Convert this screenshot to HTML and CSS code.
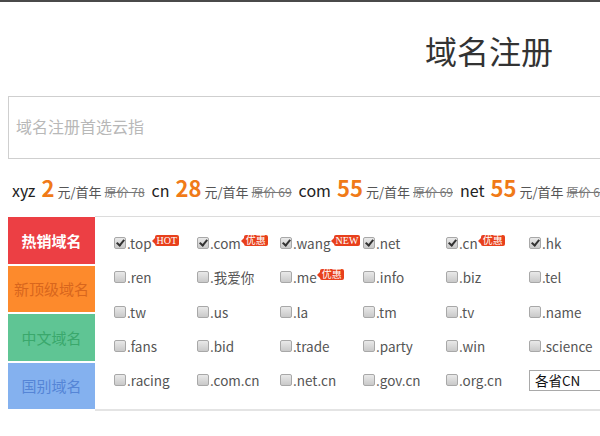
FILE: index.html
```html
<!DOCTYPE html>
<html lang="zh-CN">
<head>
<meta charset="utf-8">
<title>域名注册</title>
<link rel="stylesheet" href="styles.css">
</head>
<body>
<div class="topline"></div>
<h1 class="title">域名注册</h1>
<div class="search">
  <input class="search-input" type="text" placeholder="域名注册首选云指">
</div>
<div class="prices">
  <span class="tld">xyz</span><span class="num">2</span><span class="unit">元/首年</span><span class="orig">原价 78</span>
  <span class="tld">cn</span><span class="num">28</span><span class="unit">元/首年</span><span class="orig">原价 69</span>
  <span class="tld">com</span><span class="num">55</span><span class="unit">元/首年</span><span class="orig">原价 69</span>
  <span class="tld">net</span><span class="num">55</span><span class="unit">元/首年</span><span class="orig">原价 69</span>
</div>
<div class="panel">
  <div class="tabs">
    <div class="tab tab-hot">热销域名</div>
    <div class="tab tab-new">新顶级域名</div>
    <div class="tab tab-cn">中文域名</div>
    <div class="tab tab-country">国别域名</div>
  </div>
  <div class="grid">
    <label class="item"><span class="cb on"></span>.top<span class="badge">HOT</span></label>
    <label class="item"><span class="cb on"></span>.com<span class="badge">优惠</span></label>
    <label class="item"><span class="cb on"></span>.wang<span class="badge">NEW</span></label>
    <label class="item"><span class="cb on"></span>.net</label>
    <label class="item"><span class="cb on"></span>.cn<span class="badge">优惠</span></label>
    <label class="item"><span class="cb on"></span>.hk</label>

    <label class="item"><span class="cb"></span>.ren</label>
    <label class="item"><span class="cb"></span>.我爱你</label>
    <label class="item"><span class="cb"></span>.me<span class="badge">优惠</span></label>
    <label class="item"><span class="cb"></span>.info</label>
    <label class="item"><span class="cb"></span>.biz</label>
    <label class="item"><span class="cb"></span>.tel</label>

    <label class="item"><span class="cb"></span>.tw</label>
    <label class="item"><span class="cb"></span>.us</label>
    <label class="item"><span class="cb"></span>.la</label>
    <label class="item"><span class="cb"></span>.tm</label>
    <label class="item"><span class="cb"></span>.tv</label>
    <label class="item"><span class="cb"></span>.name</label>

    <label class="item"><span class="cb"></span>.fans</label>
    <label class="item"><span class="cb"></span>.bid</label>
    <label class="item"><span class="cb"></span>.trade</label>
    <label class="item"><span class="cb"></span>.party</label>
    <label class="item"><span class="cb"></span>.win</label>
    <label class="item"><span class="cb"></span>.science</label>

    <label class="item"><span class="cb"></span>.racing</label>
    <label class="item"><span class="cb"></span>.com.cn</label>
    <label class="item"><span class="cb"></span>.net.cn</label>
    <label class="item"><span class="cb"></span>.gov.cn</label>
    <label class="item"><span class="cb"></span>.org.cn</label>
    <div class="item"><span class="select">各省CN</span></div>
  </div>
</div>
</body>
</html>
```

FILE: styles.css
```css
html, body {
  margin: 0;
  padding: 0;
  background: #fff;
  overflow: hidden;
}
body {
  width: 600px;
  height: 436px;
  font-family: "Noto Sans CJK SC", "Noto Sans", sans-serif;
  color: #333;
}
.topline {
  height: 2px;
  background: #4a4a4a;
}
.title {
  margin: 27px 0 0 0;
  padding-left: 425px;
  font-size: 32px;
  line-height: 42px;
  font-weight: normal;
  color: #333;
  white-space: nowrap;
}
.search {
  margin-top: 25px;
  padding-left: 8px;
}
.search-input {
  display: block;
  box-sizing: border-box;
  width: 640px;
  height: 63px;
  border: 1px solid #cfcfcf;
  padding: 0 7px 4px 7px;
  font-family: "Noto Sans CJK SC", sans-serif;
  font-size: 16px;
  color: #333;
  outline: none;
}
.search-input::placeholder {
  color: #b8b8b8;
}
.prices {
  margin-top: 13px;
  padding-left: 12px;
  height: 30px;
  line-height: 30px;
  white-space: nowrap;
  display: flex;
  align-items: baseline;
}
.tld {
  font-size: 16px;
  color: #222;
  margin-right: 6px;
}
.num {
  font-size: 22px;
  font-weight: bold;
  color: #f07a18;
  margin-right: 3px;
}
.unit {
  font-size: 13px;
  color: #555;
  margin-right: 3px;
}
.orig {
  font-size: 12px;
  color: #777;
  text-decoration: line-through;
  margin-right: 7px;
}
.panel {
  margin-top: 14px;
  margin-left: 8px;
  display: flex;
  width: 640px;
}
.tabs {
  width: 87px;
  display: flex;
  flex-direction: column;
  gap: 2px;
  padding-top: 1px;
}
.tab {
  height: 46.5px;
  display: flex;
  align-items: center;
  justify-content: center;
  font-size: 15px;
}
.tab-hot {
  background: #ec3f44;
  color: #fff;
  font-weight: bold;
}
.tab-new {
  background: #fd8a2c;
  color: #d8661d;
}
.tab-cn {
  background: #5fc594;
  color: #3aa86c;
}
.tab-country {
  background: #84b1ef;
  color: #5585d6;
}
.grid {
  flex: 1;
  border-top: 1px solid #dcdcdc;
  border-bottom: 2px solid #e4e4e4;
  padding: 9px 0 12px 19px;
  display: grid;
  grid-template-columns: repeat(6, 83px);
  grid-auto-rows: 34.25px;
  align-items: center;
}
.item {
  display: flex;
  align-items: center;
  height: 20px;
  font-size: 13.5px;
  color: #555;
  white-space: nowrap;
  font-family: "Noto Sans CJK SC", sans-serif;
}
.cb {
  box-sizing: border-box;
  width: 12px;
  height: 12px;
  border: 1px solid #a8a8a8;
  border-radius: 2px;
  background: linear-gradient(#e9e9e9, #c9c9c9);
  margin-right: 1px;
  position: relative;
  flex: none;
}
.cb.on::after {
  content: "";
  position: absolute;
  left: 3px;
  top: 0px;
  width: 3px;
  height: 6px;
  border: solid #333;
  border-width: 0 2px 2px 0;
  transform: rotate(40deg);
}
.badge {
  position: relative;
  top: -3px;
  margin-left: 3px;
  background: #e8401c;
  color: #fff;
  font-size: 10px;
  line-height: 11px;
  height: 11px;
  padding: 0 2px;
  border-radius: 2px;
  font-family: "Liberation Serif", "Noto Sans CJK SC", serif;
}
.badge::before {
  content: "";
  position: absolute;
  left: -3px;
  top: 3px;
  border-right: 3px solid #e8401c;
  border-top: 3px solid transparent;
  border-bottom: 3px solid transparent;
}
.select {
  box-sizing: border-box;
  width: 90px;
  height: 21px;
  border: 1px solid #a9a9a9;
  padding-left: 5px;
  font-size: 13.5px;
  line-height: 19px;
  color: #111;
}
```
